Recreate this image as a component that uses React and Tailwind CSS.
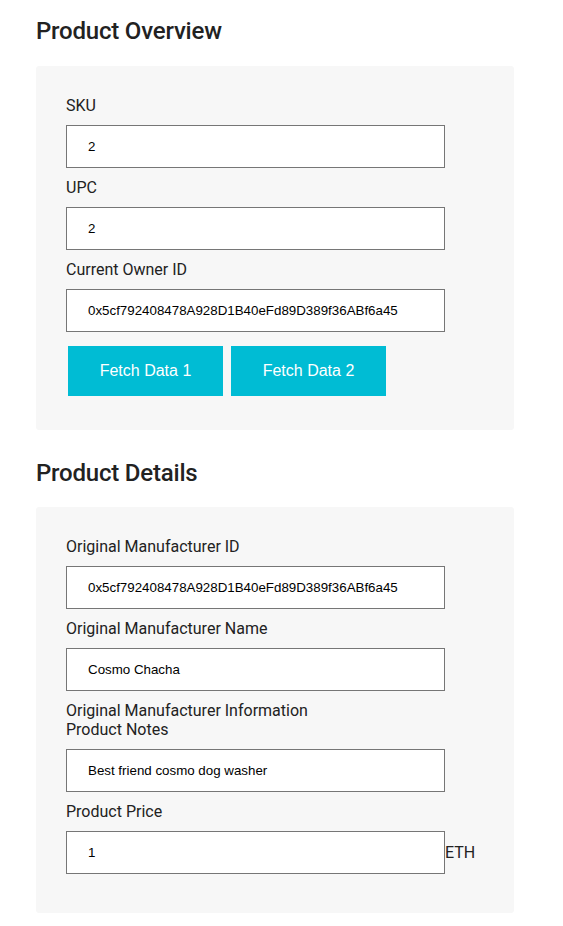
const Field = ({ label, value, suffix }) => (
  <div className="flex flex-col">
    <label className="text-[16px] leading-[19px] text-[#222]">{label}</label>
    <div className="mt-[10px] flex items-center">
      <input
        readOnly
        value={value}
        className="h-[43px] w-[379px] border border-[#767676] bg-white pl-[21px] text-[13.33px] text-black outline-none [font-family:'Liberation_Sans',Arial,sans-serif]"
      />
      {suffix && <span className="text-[16px] text-[#222]">{suffix}</span>}
    </div>
  </div>
);

const Panel = ({ children, className }) => (
  <div className={`w-[478px] rounded-[3px] bg-[#f7f7f7] pl-[30px] pt-[30px] ${className}`}>
    <div className="flex flex-col gap-[10px]">{children}</div>
  </div>
);

export default function App() {
  return (
    <div className="min-h-[926px] bg-white pl-[36px] text-[#222] [font-family:Roboto,'Liberation_Sans',sans-serif]">
      <h2 className="pt-[17px] text-[24px] font-medium leading-[28px] tracking-[-0.2px]">Product Overview</h2>
      <Panel className="mt-[21px] pb-[34px]">
        <Field label="SKU" value="2" />
        <Field label="UPC" value="2" />
        <Field label="Current Owner ID" value="0x5cf792408478A928D1B40eFd89D389f36ABf6a45" />
        <div className="mt-[4px] flex gap-[8px] pl-[2px]">
          {['Fetch Data 1', 'Fetch Data 2'].map((t) => (
            <button
              key={t}
              className="h-[50px] w-[155px] bg-[#00bcd4] text-[16px] text-white [font-family:'Liberation_Sans',Arial,sans-serif]"
            >
              {t}
            </button>
          ))}
        </div>
      </Panel>

      <h2 className="mt-[29px] text-[24px] font-medium leading-[28px] tracking-[-0.2px]">Product Details</h2>
      <Panel className="mt-[20px] pb-[39px]">
        <Field label="Original Manufacturer ID" value="0x5cf792408478A928D1B40eFd89D389f36ABf6a45" />
        <Field label="Original Manufacturer Name" value="Cosmo Chacha" />
        <Field
          label={
            <>
              Original Manufacturer Information
              <br />
              Product Notes
            </>
          }
          value="Best friend cosmo dog washer"
        />
        <Field label="Product Price" value="1" suffix="ETH" />
      </Panel>
    </div>
  );
}
